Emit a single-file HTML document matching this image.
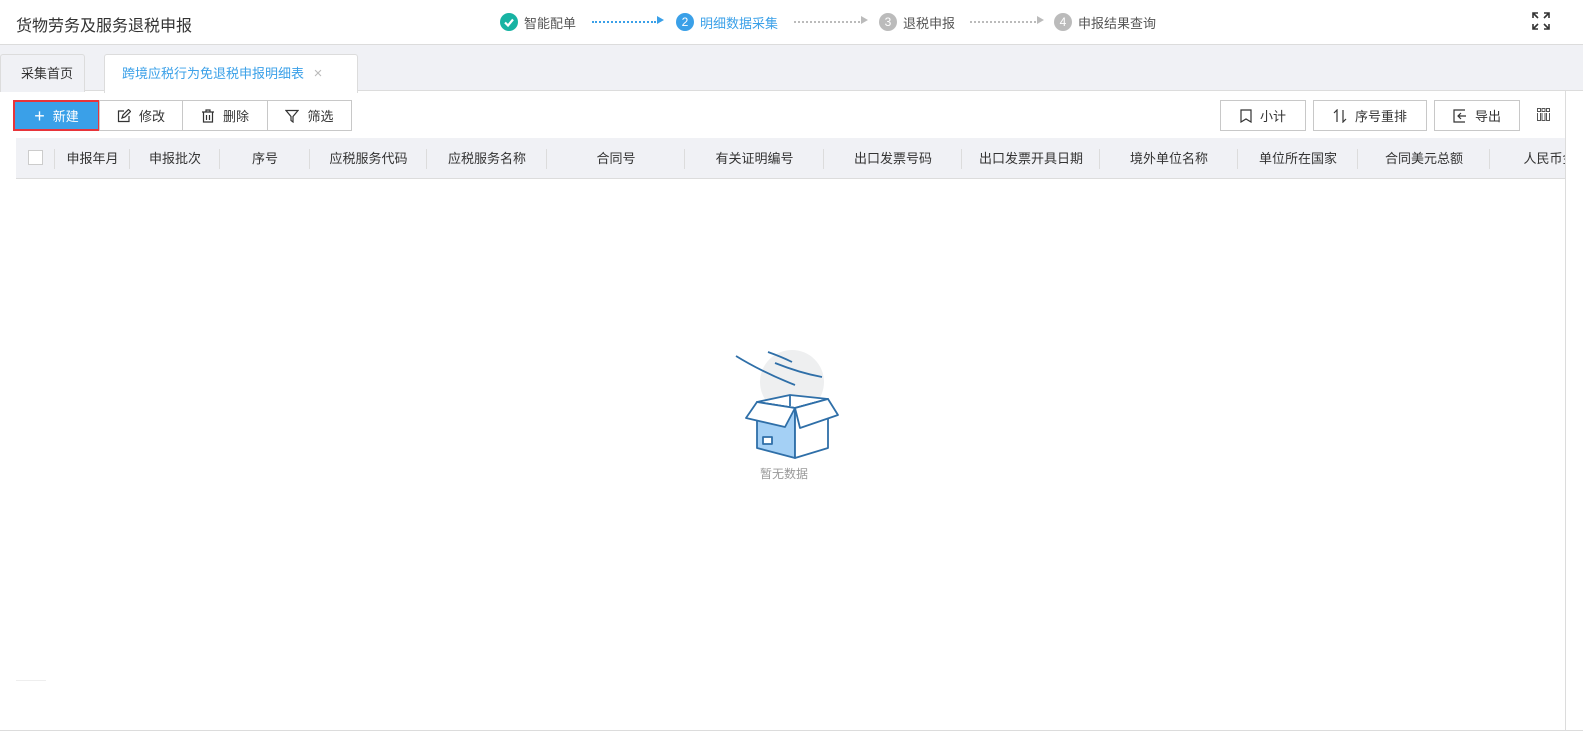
<!DOCTYPE html>
<html><head><meta charset="utf-8"><style>
*{margin:0;padding:0;box-sizing:border-box}
body{width:1583px;height:741px;overflow:hidden;background:#fff;font-family:"Liberation Sans","Noto Sans CJK SC",sans-serif;font-size:13px;color:#333;position:relative}
.abs{position:absolute}
.hdr{left:0;top:0;width:1583px;height:45px;border-bottom:1px solid #dcdcdc;background:#fff}
.title{left:16px;top:12px;font-size:16px;color:#333}
.step{top:12px;font-size:13px;display:flex;align-items:center;gap:6px;height:20px}
.circ{width:18px;height:18px;border-radius:50%;color:#fff;font-size:12px;text-align:center;line-height:18px}
.dots{top:21px;height:0;border-top:2px dotted #bbb}
.tabbar{left:0;top:45px;width:1583px;height:46px;background:#f0f1f5;border-bottom:1px solid #dcdcdc}
.tab{top:54px;height:38px;border:1px solid #dcdcdc;border-bottom:none;border-radius:3px 3px 0 0;line-height:37px;font-size:13px}
.btn{top:100px;height:31px;border:1px solid #c8c8c8;background:#fff;display:flex;align-items:center;justify-content:center;gap:8px;font-size:13px}
.th{top:138px;left:16px;width:1549px;height:41px;background:#f0f1f5;border-bottom:1px solid #dcdcdc;overflow:hidden}
.col{position:absolute;top:0;height:41px;line-height:41px;text-align:center;font-size:13px;color:#333;white-space:nowrap}
.col:after{content:"";position:absolute;right:0;top:11px;height:20px;border-right:1px solid #dcdcdc}
</style></head><body>
<div class="abs hdr"></div>
<div class="abs title">货物劳务及服务退税申报</div>
<div class="abs step" style="left:500px"><div class="circ" style="background:#17b3a3"><svg width="18" height="18" viewBox="0 0 18 18"><path d="M5 9.5l3 3 5-6" stroke="#fff" stroke-width="2.2" fill="none"/></svg></div><span style="color:#555">智能配单</span></div>
<div class="abs dots" style="left:592px;width:64px;border-color:#3aa0e8"></div><div class="abs" style="left:657px;top:16px;border-left:7px solid #3aa0e8;border-top:4px solid transparent;border-bottom:4px solid transparent"></div>
<div class="abs step" style="left:676px"><div class="circ" style="background:#3aa0e8">2</div><span style="color:#3aa0e8">明细数据采集</span></div>
<div class="abs dots" style="left:794px;width:66px"></div><div class="abs" style="left:861px;top:16px;border-left:7px solid #bbb;border-top:4px solid transparent;border-bottom:4px solid transparent"></div>
<div class="abs step" style="left:879px"><div class="circ" style="background:#bbb">3</div><span style="color:#555">退税申报</span></div>
<div class="abs dots" style="left:970px;width:66px"></div><div class="abs" style="left:1037px;top:16px;border-left:7px solid #bbb;border-top:4px solid transparent;border-bottom:4px solid transparent"></div>
<div class="abs step" style="left:1054px"><div class="circ" style="background:#bbb">4</div><span style="color:#555">申报结果查询</span></div>
<svg class="abs" style="left:1532px;top:12px" width="18" height="18" viewBox="0 0 18 18" fill="none" stroke="#333" stroke-width="1.6"><path d="M1 6V1h5M1 1l5 5M12 1h5v5M17 1l-5 5M1 12v5h5M1 17l5-5M17 12v5h-5M17 17l-5-5"/></svg>
<div class="abs tabbar"></div>
<div class="abs tab" style="left:0;width:85px;background:#f0f1f5;padding-left:20px">采集首页</div>
<div class="abs tab" style="left:104px;width:254px;background:#fff;padding-left:17px;color:#3aa0e8;height:39px">跨境应税行为免退税申报明细表 <span style="color:#bbb;margin-left:6px;font-size:15px">×</span></div>
<div class="abs" style="left:1565px;top:91px;width:1px;height:640px;background:#dcdcdc"></div>
<div class="abs" style="left:0;top:730px;width:1583px;height:1px;background:#dcdcdc"></div>
<div class="abs btn" style="left:13px;width:87px;background:#3aa0e8;border:2px solid #e8343a;color:#fff"><span style="font-size:18px;font-weight:300;line-height:1">+</span>新建</div>
<div class="abs btn" style="left:99px;width:84px"><svg width="14" height="14" viewBox="0 0 14 14" fill="none" stroke="#333" stroke-width="1.2"><path d="M7 2H1.5v10.5H12V7M5 9l1-3 5.5-5.5 2 2L8 8z"/></svg>修改</div>
<div class="abs btn" style="left:182px;width:86px"><svg width="14" height="14" viewBox="0 0 14 14" fill="none" stroke="#333" stroke-width="1.2"><path d="M1 3h12M5 3V1h4v2M2.5 3v10h9V3M5.5 6v5M8.5 6v5"/></svg>删除</div>
<div class="abs btn" style="left:267px;width:85px"><svg width="14" height="14" viewBox="0 0 14 14" fill="none" stroke="#333" stroke-width="1.2"><path d="M1 1.5h12L8 7.5V13L6 11.5V7.5z"/></svg>筛选</div>
<div class="abs btn" style="left:1220px;width:86px"><svg width="12" height="14" viewBox="0 0 12 14" fill="none" stroke="#333" stroke-width="1.2"><path d="M1 1h10v12L6 10 1 13z"/></svg>小计</div>
<div class="abs btn" style="left:1313px;width:114px"><svg width="14" height="14" viewBox="0 0 14 14" fill="none" stroke="#333" stroke-width="1.2"><path d="M4 13V1L1 4M10 1v12l3-3"/></svg>序号重排</div>
<div class="abs btn" style="left:1434px;width:86px"><svg width="14" height="14" viewBox="0 0 14 14" fill="none" stroke="#333" stroke-width="1.2"><path d="M12 1H1v12h11M13 7H5M8 4L5 7l3 3"/></svg>导出</div>
<svg class="abs" style="left:1537px;top:108px" width="13" height="13" viewBox="0 0 13 13" fill="none" stroke="#555"><rect x=".5" y=".5" width="3" height="3"/><rect x="5" y=".5" width="3" height="3"/><rect x="9.5" y=".5" width="3" height="3"/><path d="M.5 5v7.5h3V5M5 5v7.5h3V5M9.5 5v7.5h3V5"/></svg>
<div class="abs th">
<div class="col" style="left:0;width:39px"><div style="position:absolute;left:12px;top:12px;width:15px;height:15px;border:1px solid #ccc;background:#fff"></div></div>
<div class="col" style="left:39px;width:75px">申报年月</div>
<div class="col" style="left:114px;width:90px">申报批次</div>
<div class="col" style="left:204px;width:90px">序号</div>
<div class="col" style="left:294px;width:117px">应税服务代码</div>
<div class="col" style="left:411px;width:120px">应税服务名称</div>
<div class="col" style="left:531px;width:138px">合同号</div>
<div class="col" style="left:669px;width:139px">有关证明编号</div>
<div class="col" style="left:808px;width:138px">出口发票号码</div>
<div class="col" style="left:946px;width:138px">出口发票开具日期</div>
<div class="col" style="left:1084px;width:138px">境外单位名称</div>
<div class="col" style="left:1222px;width:120px">单位所在国家</div>
<div class="col" style="left:1342px;width:132px">合同美元总额</div>
<div class="col" style="left:1474px;width:132px">人民币金额</div>
</div>
<div class="abs" style="left:16px;top:680px;width:30px;height:1px;background:#eee"></div>
<svg class="abs" style="left:700px;top:330px" width="160" height="160" viewBox="0 0 160 160" fill="none" stroke="#2f6fa8" stroke-width="1.8" stroke-linejoin="round">
<circle cx="92" cy="52" r="32" fill="#eeeff0" stroke="none"/>
<path d="M36 26Q62 42 95 55M68 22Q82 27 92 32M75 33Q100 43 122 47"/>
<path d="M57 72L90 65L128 69L95 78z" fill="#fff"/>
<path d="M90 65V76"/>
<path d="M57 90V118L95 128V78L57 72z" fill="#a4d0f5"/>
<path d="M95 128L128 118V69L95 78z" fill="#fff"/>
<path d="M57 72L46 88L85 97L95 78z" fill="#fff"/>
<path d="M95 78L128 69L138 85L100 98z" fill="#fff"/>
<rect x="63" y="107" width="9" height="7" fill="#fff"/>
</svg>
<div class="abs" style="left:760px;top:465px;font-size:12px;color:#999">暂无数据</div>
</body></html>
